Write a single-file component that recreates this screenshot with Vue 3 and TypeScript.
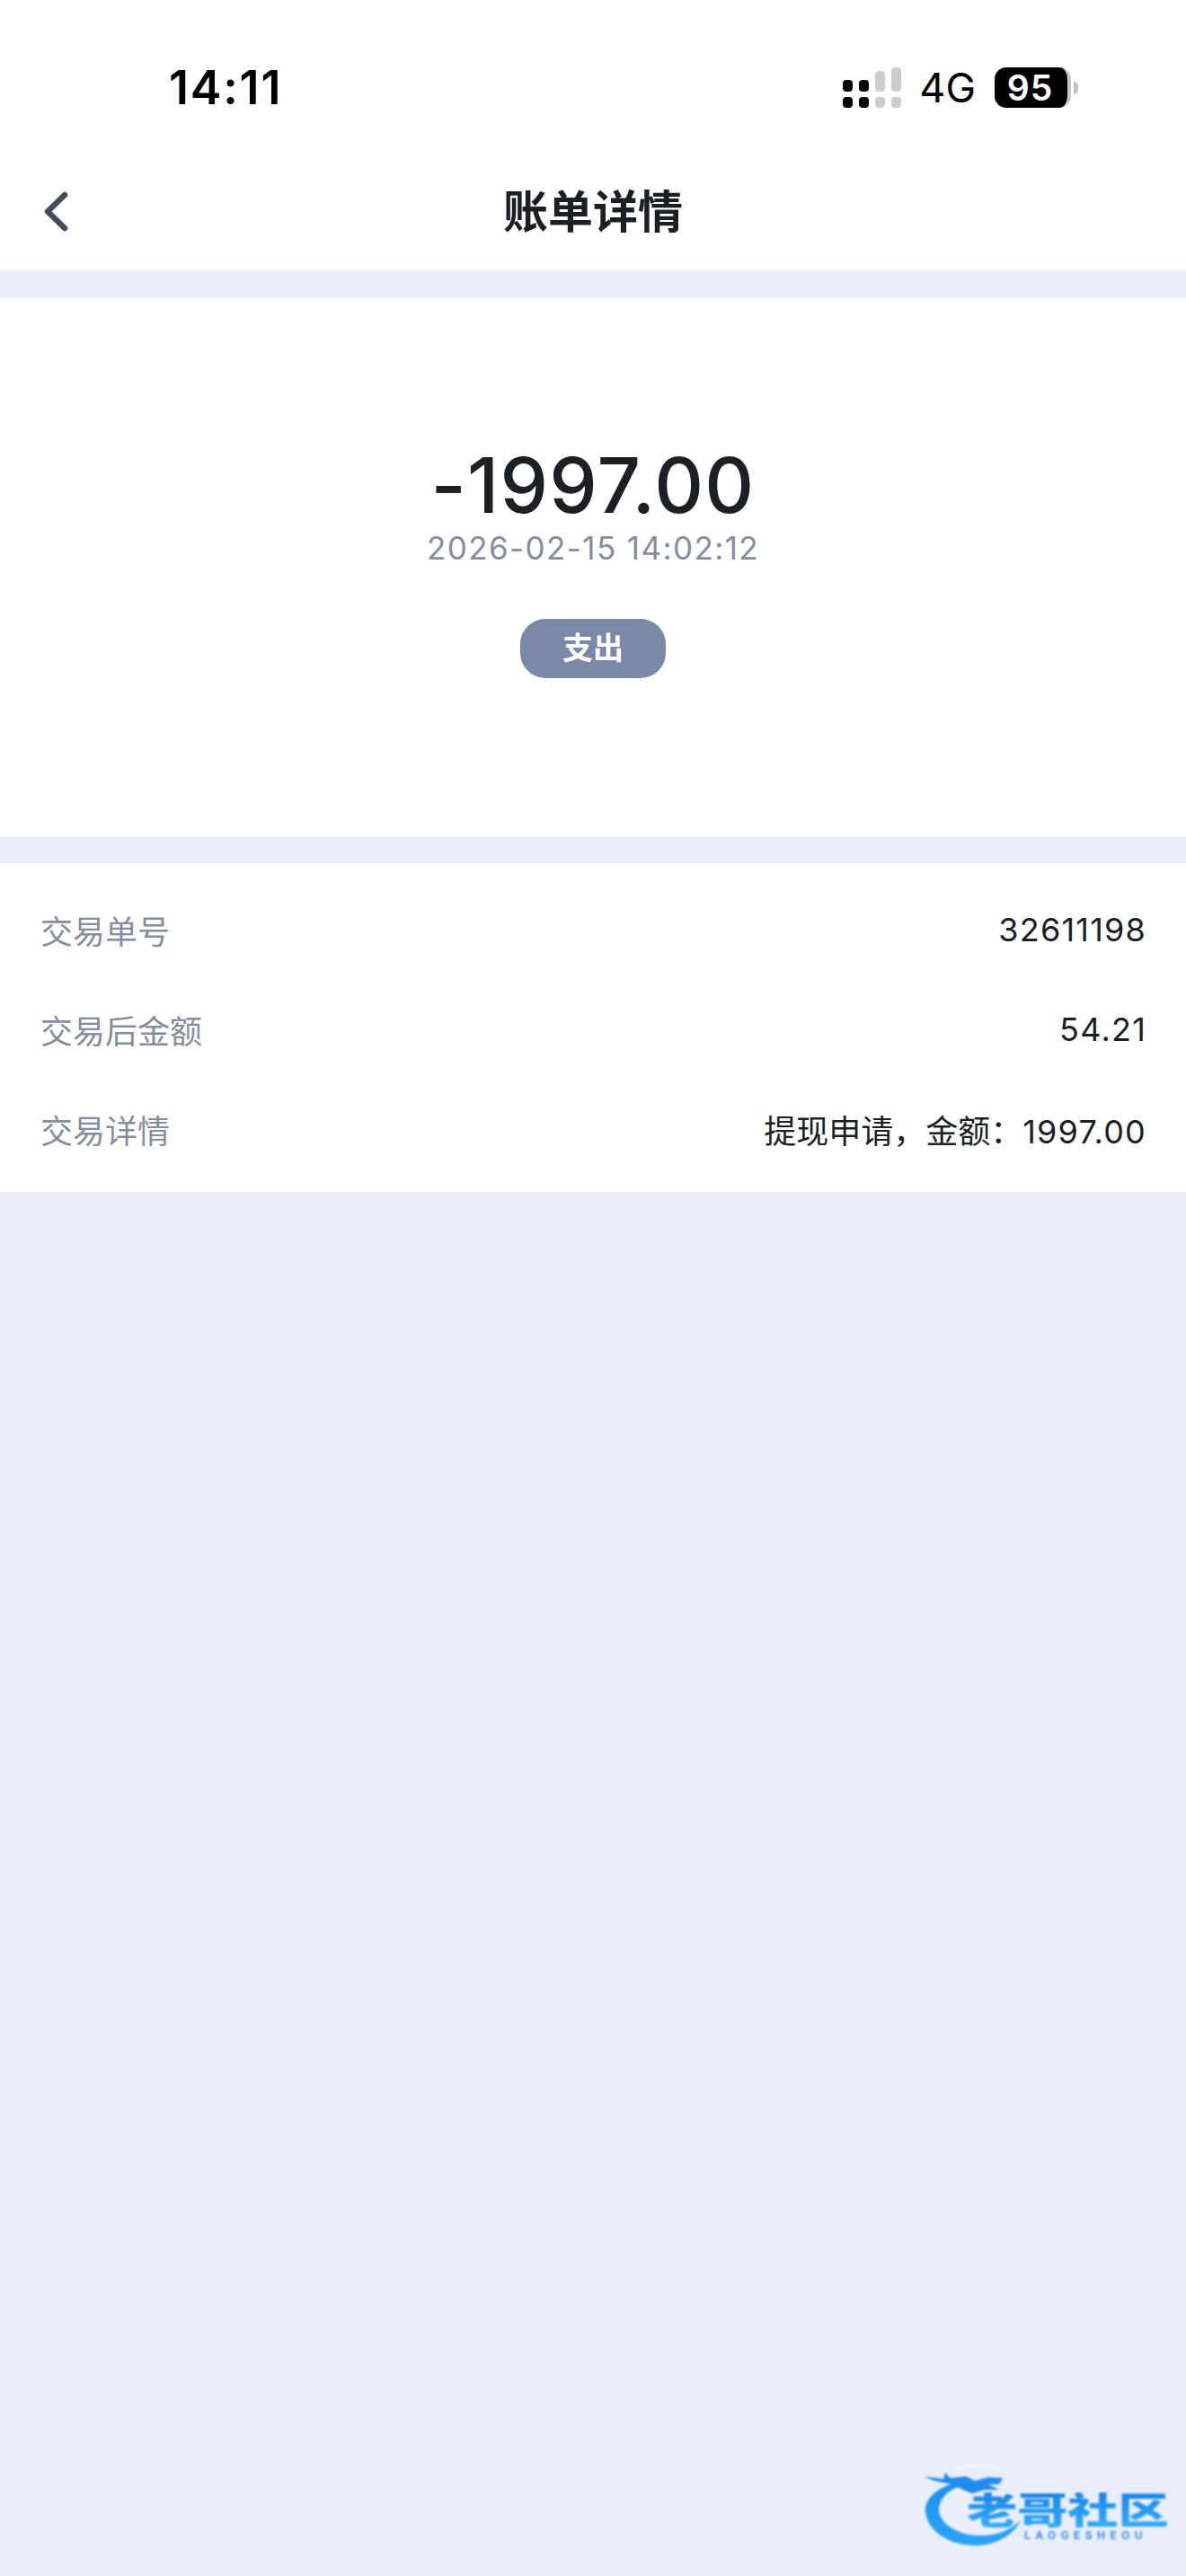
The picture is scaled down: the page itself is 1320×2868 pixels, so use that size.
<script setup lang="ts">
const rows = [
  { label: '交易单号', prefix: '', value: '32611198' },
  { label: '交易后金额', prefix: '', value: '54.21' },
  { label: '交易详情', prefix: '提现申请，金额：', value: '1997.00' },
]
</script>

<template>
  <div class="page">
    <div class="status-bar">
      <span class="time">14:11</span>
      <div class="status-right">
        <svg class="signal" width="65" height="45" viewBox="0 0 65 45">
          <rect x="0" y="14" width="11" height="13" rx="4" fill="#000" />
          <rect x="0" y="33" width="11" height="12" rx="4" fill="#000" />
          <rect x="18" y="14" width="11" height="13" rx="4" fill="#000" />
          <rect x="18" y="33" width="11" height="12" rx="4" fill="#000" />
          <rect x="36" y="4" width="11" height="23" rx="4" fill="#cdcdcd" />
          <rect x="36" y="33" width="11" height="12" rx="4" fill="#cdcdcd" />
          <rect x="54" y="0" width="11" height="27" rx="4" fill="#cdcdcd" />
          <rect x="54" y="33" width="11" height="12" rx="4" fill="#cdcdcd" />
        </svg>
        <span class="network">4G</span>
        <div class="battery">
          <div class="battery-body">95</div>
          <div class="battery-nub"></div>
        </div>
      </div>
    </div>

    <div class="nav">
      <svg class="back" width="32" height="48" viewBox="0 0 32 48">
        <path d="M26 6 L7 24.5 L26 43" fill="none" stroke="#474c5b" stroke-width="6.5" stroke-linecap="round" stroke-linejoin="round" />
      </svg>
      <div class="title">账单详情</div>
      <div></div>
    </div>

    <div class="hero">
      <div class="amount">-1997.00</div>
      <div class="date">2026-02-15 14:02:12</div>
      <div class="pill">支出</div>
    </div>

    <div class="details">
      <div class="row" v-for="row in rows" :key="row.label">
        <span class="label">{{ row.label }}</span>
        <span class="value"><span class="prefix">{{ row.prefix }}</span>{{ row.value }}</span>
      </div>
    </div>

    <div class="logo">
      <svg class="dragon" width="320" height="138" viewBox="0 0 320 138">
        <defs>
          <linearGradient id="dragonFill" x1="0" y1="0" x2="0" y2="1">
            <stop offset="0" stop-color="#1d8ff0" />
            <stop offset="1" stop-color="#2ba4f7" />
          </linearGradient>
        </defs>
        <path d="M60 20 C80 12 105 14 115 22" fill="none" stroke="#f6f8fc" stroke-width="2" />
        <path d="M66 33 C42 40 29 52 30 66 C32 90 60 105 88 104 C110 103 128 92 136 76 C124 88 106 94 88 93 C66 92 46 80 45 65 C45 52 55 42 70 38 Z" fill="url(#dragonFill)" />
        <path d="M28 27 L50 30 L52 23 L58 29 L75 27 L85 32 L100 28 L116 29 L112 36 L100 36 L112 42 L96 42 L82 46 L72 42 L60 36 L40 32 Z" fill="#1f8cec" />
      </svg>
      <span class="logo-name">老哥社区</span>
      <span class="logo-sub">LAOGESHEOU</span>
    </div>
  </div>
</template>

<style scoped>
.page {
  position: relative;
  height: 2868px;
  background: #e9eef8;
  overflow: hidden;
  font-family: Inter, "Noto Sans CJK SC", sans-serif;
}

.status-bar {
  height: 168px;
  box-sizing: border-box;
  padding: 27px 120px 0 188px;
  background: #fff;
  display: flex;
  align-items: center;
  justify-content: space-between;
}

.time {
  font-size: 52px;
  font-weight: 600;
  letter-spacing: 1.8px;
  color: #000;
}

.status-right {
  display: flex;
  align-items: center;
}

.signal {
  display: block;
}

.network {
  margin-left: 20px;
  font-size: 45px;
  color: #000;
}

.battery {
  margin-left: 21px;
  display: flex;
  align-items: center;
}

.battery-body {
  width: 85px;
  height: 45px;
  box-sizing: border-box;
  padding-right: 2px;
  background: #000;
  border-right: 4px solid #c8c8c8;
  border-radius: 13px;
  color: #fff;
  font-size: 39px;
  font-weight: 600;
  letter-spacing: 1px;
  line-height: 45px;
  text-align: center;
}

.battery-nub {
  margin-left: 3px;
  width: 5px;
  height: 14px;
  background: #c4c4c4;
  border-radius: 0 5px 5px 0;
}

.nav {
  height: 133px;
  box-sizing: border-box;
  padding: 0 46px 5px;
  background: #fff;
  display: grid;
  grid-template-columns: 1fr auto 1fr;
  align-items: center;
}

.back {
  display: block;
  margin-top: 5px;
}

.title {
  font-size: 50px;
  font-weight: 600;
  color: #1c1f24;
}

.hero {
  margin-top: 30px;
  height: 600px;
  box-sizing: border-box;
  padding-top: 160px;
  background: #fff;
  display: flex;
  flex-direction: column;
  align-items: center;
}

.amount {
  font-size: 85px;
  line-height: 100px;
  font-weight: 500;
  letter-spacing: 1.2px;
  color: #1c1f24;
}

.date {
  font-size: 35px;
  line-height: 39px;
  letter-spacing: 1.4px;
  color: #868d9f;
}

.pill {
  margin-top: 59px;
  width: 162px;
  height: 66px;
  border-radius: 28px;
  background: #7b88a8;
  color: #fff;
  font-size: 34px;
  font-weight: 600;
  line-height: 66px;
  text-align: center;
}

.details {
  margin-top: 30px;
  height: 366px;
  box-sizing: border-box;
  padding: 18px 44px 15px 45px;
  background: #fff;
}

.row {
  height: 111px;
  display: flex;
  align-items: center;
  justify-content: space-between;
}

.label {
  font-size: 36px;
  color: #868d9f;
}

.value {
  font-size: 36px;
  letter-spacing: 1.2px;
  color: #1c1f24;
}

.prefix {
  letter-spacing: 0;
}

.logo {
  position: absolute;
  right: 0;
  bottom: 0;
  width: 320px;
  height: 138px;
  filter: blur(0.8px);
}

.dragon {
  position: absolute;
  left: 0;
  top: 0;
}

.logo-name {
  position: absolute;
  left: 76px;
  top: 45px;
  font-size: 41px;
  line-height: 40px;
  font-weight: 900;
  white-space: nowrap;
  transform: scaleX(1.37);
  transform-origin: left center;
  background: linear-gradient(#1a85ea, #35aef8);
  -webkit-background-clip: text;
  background-clip: text;
  color: transparent;
}

.logo-sub {
  position: absolute;
  left: 140px;
  top: 87px;
  font-size: 12px;
  line-height: 12px;
  font-weight: 700;
  letter-spacing: 5.4px;
  color: #3a94e6;
  white-space: nowrap;
}
</style>
